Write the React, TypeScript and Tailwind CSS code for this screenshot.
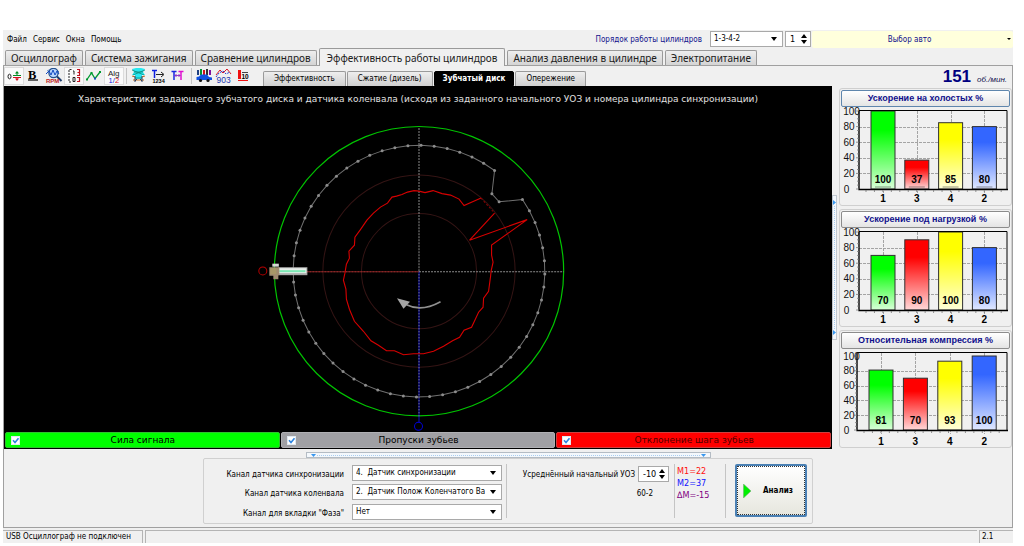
import { useState } from "react";
import type { ReactNode } from "react";

const mainTabs = [
  "Осциллограф",
  "Система зажигания",
  "Сравнение цилиндров",
  "Эффективность работы цилиндров",
  "Анализ давления в цилиндре",
  "Электропитание",
];
const subTabs = ["Эффективность", "Сжатие (дизель)", "Зубчатый диск", "Опережение"];

const CX = 418.5;
const CY = 271;

function polar(deg: number, r: number): [number, number] {
  const a = (deg * Math.PI) / 180;
  return [CX + r * Math.sin(a), CY - r * Math.cos(a)];
}

const teeth: [number, number][] = [];
for (let i = 0; i < 58; i++) teeth.push(polar(55.3 + i * 5.993, 125.7));
teeth.push([491.3, 193.7], [498.5, 201.7]);

const deviation =
  "494,213 469,240 526.5,219.5 491,245 491,255 492.5,262 490.5,271 490,276 488,291 483,298 482.5,307 478,312 471,327 463.5,330 459,337 452,340.5 443,346 433,351 423,353.5 413,353.5 403,354.5 394,350.5 386,350.5 378,345 370.5,340.5 363,331 354,321 349,309 346,299 345.5,289 343,280 344.5,273 346,264 349,258 348.5,251 354,245 354.5,237 360,229.5 366.5,220 373,213 380,207 387,203 391.5,197 396,196 401.5,194.5 407,192 413.5,190.5 418.5,191 424.5,192.5 432.5,190.5 441.5,193.5 450,195 458.5,199 463.5,205.5 480.5,198";

function Caret({ className = "" }: { className?: string }) {
  return (
    <svg viewBox="0 0 6 4" className={`pointer-events-none w-[6px] h-[4px] ${className}`} aria-hidden="true">
      <path d="M0 0H6L3 4Z" fill="#000" />
    </svg>
  );
}

function Picker({ id, options, className }: { id: string; options: string[]; className: string }) {
  return (
    <div className={`relative ${className}`}>
      <select
        id={id}
        className="block h-full w-full appearance-none border border-[#a9a9a9] bg-white pr-4 pl-[3px] font-['DejaVu_Sans_Condensed','Noto_Sans',sans-serif] text-[8px] leading-[14px] text-black outline-none"
      >
        {options.map((o) => (
          <option key={o}>{o}</option>
        ))}
      </select>
      <Caret className="absolute top-1/2 right-[6px] -translate-y-1/2" />
    </div>
  );
}

function Spinner({ id, value, label, className }: { id: string; value: number; label?: string; className: string }) {
  const [n, setN] = useState(value);
  return (
    <div className={`flex items-center border border-[#a9a9a9] bg-white pr-[3px] ${className}`}>
      <input
        id={id}
        type="number"
        aria-label={label}
        value={n}
        onChange={(e) => setN(Number(e.target.value))}
        className="w-0 min-w-0 flex-1 bg-transparent pl-1 text-[9px] leading-[14px] outline-none [appearance:textfield] [&::-webkit-inner-spin-button]:appearance-none"
      />
      <div className="flex flex-col gap-[2px]">
        <button type="button" aria-label="Больше" onClick={() => setN(n + 1)}>
          <Caret className="block rotate-180" />
        </button>
        <button type="button" aria-label="Меньше" onClick={() => setN(n - 1)}>
          <Caret className="block" />
        </button>
      </div>
    </div>
  );
}

function Tool({ label, pressed, children }: { label: string; pressed?: boolean; children: ReactNode }) {
  return (
    <button
      type="button"
      aria-label={label}
      aria-pressed={!!pressed}
      className={`h-[18px] w-5 ${pressed ? "border border-[#dcdcdc] bg-[#fafafa]" : "border border-transparent"}`}
    >
      <svg viewBox="1 1 18 16" className="block h-4 w-[18px]" fontFamily="Liberation Sans, sans-serif">
        {children}
      </svg>
    </button>
  );
}

function Toolbar() {
  return (
    <div className="flex items-center">
      <Tool label="Ноль" pressed>
        <ellipse cx="5.5" cy="9.5" rx="1.5" ry="2.3" fill="none" stroke="#222" />
        <path d="M9 8.500H17M13 8V5" stroke="#008a20" fill="none" />
        <path d="M11 6.500L13 4L15 6.500Z" fill="#008a20" />
        <path d="M9 10.500H17M13 10V12" stroke="#d01020" fill="none" />
        <path d="M11 11.500L13 14L15 11.500Z" fill="#d01020" />
      </Tool>
      <Tool label="Жирные линии">
        <text x="4" y="11.500" fontSize="12.500" fontWeight="bold" fontFamily="Liberation Serif, serif">B</text>
        <path d="M4 13H14" stroke="#000" strokeWidth="1.2" />
      </Tool>
      <Tool label="Обороты">
        <path d="M3 4L7 2H12L15 5" fill="none" stroke="#6a90c8" />
        <circle cx="9.5" cy="6" r="4.6" fill="#bcd8ff" stroke="#24508c" strokeWidth="1.3" />
        <path d="M2 7L5 4L7 8L9 3L11 8L13 4L15 7" fill="none" stroke="#1048c0" />
        <path d="M13 9.500L17.500 14" stroke="#1c3c6c" strokeWidth="2" />
        <text x="2" y="15.500" fontSize="6" fontWeight="bold" fill="#c02020">RPM</text>
      </Tool>
      <Tool label="Шкала" pressed>
        <path d="M7.500 2.500H5V15H7.500" fill="none" stroke="#222" strokeDasharray="2 1" />
        <path d="M9 4H10V7.500M9 10.500H11V14.500H9Z" fill="none" stroke="#222" />
        <path d="M13 2.500H15.500V5.500H13.500M15.500 5.500V8.500H13M13 10.500H15.500V14.500H13" fill="none" stroke="#c01020" strokeWidth="1.2" />
      </Tool>
      <Tool label="График">
        <path d="M3 12.500L7.500 6L11 11.500L16 5" fill="none" stroke="#009a30" strokeWidth="1.3" />
        <path d="M2 11.500H4V13.500H2ZM6.500 5H8.500V7H6.500ZM15 4H17V6H15Z" fill="#009a30" />
        <path d="M10 10.500H12V12.500H10Z" fill="#1850c0" />
      </Tool>
      <Tool label="Алгоритм" pressed>
        <text x="4" y="8.500" fontSize="8" fill="#222">Alg</text>
        <text x="4.500" y="15.500" fontSize="7.500" fill="#1020e0">1/</text>
        <text x="11" y="15.500" fontSize="7.500" fill="#e01020">2</text>
      </Tool>
      <span className="mx-[2px] h-4 w-px bg-[#c4c4c4]" />
      <Tool label="Автомобиль">
        <path d="M3 2L7 1H12L16 2L14 5L16 8H13V12H6V8H3L5 5Z" fill="#28e8f0" />
        <path d="M3 3L15 8M16 3L4 8M5 5H14M6 11H13" stroke="#108878" strokeWidth=".8" />
        <path d="M3 9L6 10M16 9L13 10M4 13H15" stroke="#c07020" />
        <path d="M6 9V15M13 9V15M6 14L8 12M13 14L11 12" stroke="#304060" fill="none" />
      </Tool>
      <Tool label="Метки по порядку">
        <path d="M3 3.500H8M5.500 3.500V11" stroke="#1020e0" strokeWidth="1.5" fill="none" />
        <path d="M7 7.500H14M12 5L15 7.500L12 10" stroke="#222" fill="none" />
        <text x="3.500" y="15.500" fontSize="5.500" fontWeight="bold">1234</text>
      </Tool>
      <Tool label="Интервал">
        <path d="M2.500 4.500H7.500M5 4V13" stroke="#1828e0" strokeWidth="1.5" />
        <path d="M9.500 4.500H14.500M12 4V13" stroke="#e010d0" strokeWidth="1.5" />
        <path d="M6 8.500H11M7.500 7L6 8.500L7.500 10M9.500 7L11 8.500L9.500 10" stroke="#8010c0" fill="none" strokeWidth=".8" />
      </Tool>
      <span className="mx-[2px] h-4 w-px bg-[#c4c4c4]" />
      <Tool label="Сравнение авто">
        <path d="M3 3H5V8H3Z" fill="#204080" /><path d="M6 2H8V8H6Z" fill="#009030" />
        <path d="M9 3H11V8H9Z" fill="#d01020" /><path d="M12 2H14V8H12Z" fill="#303030" />
        <path d="M15 3H17V8H15Z" fill="#8010a0" />
        <path d="M2.500 10L5 9.500L7 7.500H13L15 10L18 10.500V13H2.500Z" fill="#1050e0" />
        <circle cx="6.500" cy="13.500" r="1.600" fill="#111" /><circle cx="14" cy="13.500" r="1.600" fill="#111" />
      </Tool>
      <Tool label="УОЗ">
        <path d="M2 8L6 3L9 6L13 2L17 7" fill="none" stroke="#d81828" />
        <path d="M2 10L5 6L9 4L12 7L16 5" fill="none" stroke="#2848d8" strokeDasharray="2 1" />
        <text x="2.500" y="15.500" fontSize="8.500" fill="#1838b0">903</text>
      </Tool>
      <Tool label="Порог">
        <path d="M4 3H7V12H4Z" fill="#f01010" />
        <path d="M4 13.500H14" stroke="#f01010" />
        <path d="M8 5.500H14" stroke="#444" />
        <text x="7.500" y="12" fontSize="6.500" fontWeight="bold">10</text>
      </Tool>
    </div>
  );
}

function Disc() {
  return (
    <svg viewBox="4 112 827 319" className="block w-full" role="img" aria-label="Диаграмма зубчатого диска">
      <circle cx={CX} cy={CY} r="57.500" fill="none" stroke="#341414" />
      <circle cx={CX} cy={CY} r="96" fill="none" stroke="#341414" />
      <circle cx={CX} cy={CY} r="144.500" fill="none" stroke="#00c400" strokeWidth="1.2" />
      <path d="M418.500 271V127M418.500 271.500H563" stroke="#8a8a8a" strokeDasharray="2 1" />
      <path d="M418.500 271V422" stroke="#1010c0" />
      <path d="M418.500 271V416" stroke="#9a9a9a" strokeDasharray="1 2" />
      <path d="M306 271.500H418" stroke="#5a2020" />
      <path d="M306 271.500H418" stroke="#a02828" strokeDasharray="2 1" />
      <polygon points={teeth.map((p) => p.join(",")).join(" ")} fill="none" stroke="#707070" />
      {teeth.map((p, i) => (
        <circle key={i} cx={p[0]} cy={p[1]} r="1.500" fill="#8c8c8c" />
      ))}
      <polyline points={deviation} fill="none" stroke="#d80000" strokeWidth="1.1" />
      <path d="M480.500 198L494 213" stroke="#900000" strokeDasharray="2 2" />
      <circle cx="262.500" cy="270.700" r="4" fill="none" stroke="#b80000" />
      <circle cx="418" cy="426" r="4" fill="none" stroke="#0000d8" />
      <rect x="278" y="267" width="29" height="8" fill="#a8a8a8" />
      <rect x="278" y="268" width="28" height="5" fill="#e8eeea" />
      <rect x="279" y="270" width="26" height="2" fill="#7ce8b4" />
      <path d="M269 267H279V275H278V279H273V275.500H269Z" fill="#a08c70" />
      <path d="M270 268H276V274H270Z" fill="#a89868" />
      <path d="M272 263.500H278.500V266.500H272Z" fill="#d8d8d8" />
      <path d="M440 301.500Q421 312 406 304.500" fill="none" stroke="#909090" strokeWidth="1.6" />
      <path d="M396.500 298L409.500 301.500L403 308.500Z" fill="#a4a4a4" />
    </svg>
  );
}

type Bar = { name: string; value: number; color: string };
const palette: [string, string][] = [
  ["1", "#00ff00"],
  ["3", "#ff0000"],
  ["4", "#ffff00"],
  ["2", "#3366ff"],
];

function makeBars(values: number[]): Bar[] {
  return values.map((value, i) => ({ name: palette[i][0], color: palette[i][1], value }));
}

function BarPanel({ id, title, bars, headroom = 0, active }: { id: string; title: string; bars: Bar[]; headroom?: number; active?: boolean }) {
  const left = headroom ? 18 : 20;
  const right = 168;
  const top = 5;
  const base = headroom ? 82 : 83;
  const nameY = 96 + (headroom ? 1 : 0);
  const scale = (base - top - headroom) / 100;
  const y = (v: number) => base - v * scale;
  const x = (i: number) => (headroom ? 42 : 44) + i * (headroom ? 34.4 : 33.8);
  return (
    <section className="rounded-[3px] border border-[#cfcfcf] px-px pt-px">
      <button
        type="button"
        className={`block h-[17px] w-full rounded-[2px] border bg-linear-to-b from-white to-[#e4e4e4] text-center text-[9px] leading-none font-bold text-[#10108c] ${active ? "border-[#5f86ad]" : "border-[#8c8c8c]"}`}
      >
        {title}
      </button>
      <svg viewBox="2 1 169 98" className="block w-full" role="img" aria-label={title} fontFamily="Liberation Sans, sans-serif">
        <defs>
          {bars.map((b, i) => (
            <linearGradient key={i} id={`${id}-${i}`} x1="0" y1="0" x2="0" y2="1">
              <stop offset=".25" stopColor={b.color} />
              <stop offset="1" stopColor={b.color} stopOpacity=".15" />
            </linearGradient>
          ))}
        </defs>
        {[20, 40, 60, 80].map((v) => (
          <path key={v} d={`M${left} ${Math.round(y(v)) + 0.5}H${right}`} stroke="#a4a4a4" strokeDasharray="3 1" />
        ))}
        {bars.map((b, i) => (
          <path key={b.name} d={`M${Math.round(x(i)) + 0.5} ${top}V${base + 4}`} stroke="#a4a4a4" strokeDasharray="3 1" />
        ))}
        {bars.map((b, i) => (
          <g key={b.name}>
            <rect x={x(i) - 12} y={y(b.value)} width="24" height={base - y(b.value)} fill="#fff" />
            <rect x={x(i) - 12} y={y(b.value)} width="24" height={base - y(b.value)} fill={`url(#${id}-${i})`} stroke="#303030" />
            {active && <rect x={x(i) - 8} y={base - 3} width="16" height="2" fill="#000" opacity=".2" />}
            <text x={x(i)} y={base - 6} fontSize="10" fontWeight="bold" textAnchor="middle">{b.value}</text>
            <text x={x(i)} y={nameY} fontSize="10" fontWeight="bold" textAnchor="middle">{b.name}</text>
          </g>
        ))}
        <path d={`M${left} ${top - 0.5}H${right}V${base}`} fill="none" stroke="#000" />
        <path d={`M${left} ${top}V${base + 0.5}H${right + 1}`} fill="none" stroke="#000" strokeWidth="1.4" />
        {Array.from({ length: 21 }, (_, i) => (
          <path key={i} d={`M${left - (i % 4 ? 2 : 3)} ${y(i * 5)}H${left}`} stroke="#777" strokeWidth=".8" />
        ))}
        {Array.from({ length: 17 }, (_, i) => (
          <path key={i} d={`M${left + 7 + i * 8.45} ${base + 1}V${base + 3}`} stroke="#777" strokeWidth=".8" />
        ))}
        {[0, 20, 40, 60, 80, 100].map((v) => (
          <text key={v} x={v === 0 ? 7.5 : v === 100 ? 12.5 : 10} y={y(v) + 3.5} fontSize="10" fill="#111" textAnchor="middle">{v}</text>
        ))}
      </svg>
    </section>
  );
}

function Legend({ text, className }: { text: string; className: string }) {
  return (
    <label className={`flex h-4 flex-1 items-center rounded-[2px] border px-[5px] text-[9px] ${className}`}>
      <span className="relative flex size-[9px]">
        <input type="checkbox" defaultChecked className="peer size-full appearance-none border border-[#dfe8f0] bg-white" />
        <svg viewBox="0 0 9 9" className="pointer-events-none invisible absolute inset-0 peer-checked:visible">
          <path d="M2 4.300L4 6.500L7.500 2.200" fill="none" stroke="#2c84e0" strokeWidth="1.6" />
        </svg>
      </span>
      <span className="flex-1 pt-px pr-2 text-center leading-none">{text}</span>
    </label>
  );
}

export default function App() {
  const [tab, setTab] = useState(3);
  const [sub, setSub] = useState(2);
  return (
    <div className="min-h-screen bg-white pt-[30px] pr-[11px] pl-[3px] font-['Liberation_Sans',Arial,sans-serif] text-[9px] leading-none text-black">
      <div className="bg-[#f0f0f0]">
        <header className="flex h-[18px] items-center font-['DejaVu_Sans_Condensed','Noto_Sans',sans-serif] text-[8px]">
          <nav className="flex flex-1 gap-[6px] pt-[2px] pl-1">
            {["Файл", "Сервис", "Окна", "Помощь"].map((m) => (
              <button key={m} type="button">{m}</button>
            ))}
          </nav>
          <label htmlFor="order" className="mr-2 pt-[2px] text-[#10108c]">
            Порядок работы цилиндров
          </label>
          <Picker id="order" options={["1-3-4-2", "1-2-4-3"]} className="h-4 w-[73px]" />
          <Spinner id="cyl" value={1} label="Номер цилиндра" className="ml-[2px] h-4 w-[26px]" />
          <button type="button" className="ml-px flex h-[17px] w-[201px] items-center rounded-[2px] bg-[#ffffdc] pr-[2px] text-[#10108c]">
            <span className="flex-1 pt-px">Выбор авто</span>
            <svg viewBox="0 0 4 2" className="h-[2px] w-1" aria-hidden="true"><path d="M0 0H4L2 2Z" fill="#000" /></svg>
          </button>
        </header>

        <div role="tablist" className="flex h-[17px] items-end gap-[2px] pl-[2px] font-['Noto_Sans',sans-serif] text-[10px]">
          {mainTabs.map((t, i) => (
            <button
              key={t}
              type="button"
              role="tab"
              aria-selected={i === tab}
              onClick={() => setTab(i)}
              className={`rounded-t-[2px] border border-b-0 whitespace-nowrap text-[#202020] ${i === tab ? "-mb-px h-[18px] border-[#9a9a9a] bg-[#f0f0f0] px-[7px]" : "h-[15px] border-[#9a9a9a] bg-linear-to-b from-[#eeeeee] to-[#d4d4d4] px-[5px]"}`}
            >
              {t}
            </button>
          ))}
        </div>

        <main className="border border-[#a0a0a0]">
          <div className="flex h-5 items-center">
            <Toolbar />
            <div role="tablist" className="ml-[9px] flex items-end gap-px self-end font-['DejaVu_Sans_Condensed','Noto_Sans',sans-serif] text-[8px]">
              {subTabs.map((t, i) => (
                <button
                  key={t}
                  type="button"
                  role="tab"
                  aria-selected={i === sub}
                  onClick={() => setSub(i)}
                  className={`h-[15px] rounded-t-[2px] border whitespace-nowrap ${i === sub ? "border-black bg-black px-2 font-bold text-white" : "border-b-0 border-[#9a9a9a] bg-linear-to-b from-[#eeeeee] to-[#d0d0d0] px-[10px]"}`}
                >
                  {t}
                </button>
              ))}
            </div>
            <p className="ml-auto flex items-baseline gap-[6px] pr-[5px] text-[#000080]">
              <strong className="text-[17px]">151</strong>
              <em className="text-[8px] text-[#10104c]">об./мин.</em>
            </p>
          </div>

          <div className="flex">
            <section className="min-w-0 flex-1 bg-black">
              <h1 className="h-[26px] pt-[9px] text-center font-['DejaVu_Sans',sans-serif] text-[9px] text-[#e0e0e0]">
                Характеристики задающего зубчатого диска и датчика коленвала (исходя из заданного начального УОЗ и номера цилиндра синхронизации)
              </h1>
              <Disc />
              <div className="flex gap-px px-px py-px font-['DejaVu_Sans',sans-serif] text-black">
                <Legend text="Сила сигнала" className="border-[#30c030] bg-[#00ff00]" />
                <Legend text="Пропуски зубьев" className="border-[#b0b0b4] bg-[#a0a0a4]" />
                <Legend text="Отклонение шага зубьев" className="border-[#d04040] bg-[#ff0000] text-[#500000]" />
              </div>
            </section>

            <div className="flex w-[7px] flex-col justify-center">
              <button type="button" aria-label="Свернуть панель" className="flex h-[145px] w-[5px] flex-col items-center justify-between border border-[#c0c8d0] bg-[#f4f8fc] py-1">
                <svg viewBox="0 0 3 5" className="h-[5px] w-[3px]"><path d="M0 0L3 2.500L0 5Z" fill="#3898f0" /></svg>
                <span className="my-px w-0 flex-1 border-l border-dotted border-[#a8cdf0]" />
                <svg viewBox="0 0 3 5" className="h-[5px] w-[3px]"><path d="M0 0L3 2.500L0 5Z" fill="#3898f0" /></svg>
              </button>
            </div>

            <aside className="flex w-[173px] flex-col gap-[3px] pt-[2px]">
              <BarPanel id="idle" title="Ускорение на холостых %" bars={makeBars([100, 37, 85, 80])} active />
              <BarPanel id="load" title="Ускорение под нагрузкой %" bars={makeBars([70, 90, 100, 80])} />
              <BarPanel id="comp" title="Относительная компрессия %" bars={makeBars([81, 70, 93, 100])} headroom={3} />
            </aside>
          </div>

          <div className="flex flex-col items-center pt-[3px] pb-[3px]">
            <button type="button" aria-label="Свернуть настройки" className="flex h-[6px] w-[405px] items-center justify-between border border-[#b4bcc4] bg-[#f4f8fc] px-1">
              <svg viewBox="0 0 5 3" className="h-[3px] w-[5px]"><path d="M0 0H5L2.500 3Z" fill="#3898f0" /></svg>
              <span className="mx-px h-0 flex-1 border-t border-dotted border-[#a8cdf0]" />
              <svg viewBox="0 0 5 3" className="h-[3px] w-[5px]"><path d="M0 0H5L2.500 3Z" fill="#3898f0" /></svg>
            </button>
            <form
              className="flex h-[66px] w-[610px] rounded-[2px] border border-[#d0d0d0] pt-[5px] font-['DejaVu_Sans_Condensed','Noto_Sans',sans-serif] text-[8px]"
              onSubmit={(e) => e.preventDefault()}
            >
              <div className="grid h-[56px] w-[298px] grid-cols-[1fr_150px] items-center gap-x-2 gap-y-[3px]">
                <label htmlFor="sync" className="pt-1 text-right">Канал датчика синхронизации</label>
                <Picker id="sync" options={["4.\u00a0 Датчик синхронизации"]} className="h-4" />
                <label htmlFor="crank" className="pt-1 text-right">Канал датчика коленвала</label>
                <Picker id="crank" options={["2.\u00a0 Датчик Полож Коленчатого Ва"]} className="h-4" />
                <label htmlFor="phase" className="pt-1 text-right">Канал для вкладки "Фаза"</label>
                <Picker id="phase" options={["Нет"]} className="h-4" />
              </div>
              <span className="ml-1 h-[54px] w-px bg-[#c4c4c4]" />
              <div className="flex w-[167px] flex-col items-end gap-2 pt-[2px] pr-[5px]">
                <div className="flex items-center gap-[3px]">
                  <label htmlFor="adv" className="pt-[2px] whitespace-nowrap">Усреднённый начальный УОЗ</label>
                  <Spinner id="adv" value={-10} className="h-4 w-[31px]" />
                </div>
                <span className="pr-4">60-2</span>
              </div>
              <div className="flex h-[54px] w-[51px] flex-col gap-[3px] border-l border-[#c4c4c4] pt-[3px] pl-[2px] text-[9px]">
                <span className="text-[#ff1010]">M1=22</span>
                <span className="text-[#1010ff]">M2=37</span>
                <span className="text-[#800080]">∆M=-15</span>
              </div>
              <span className="h-[54px] w-px bg-[#c4c4c4]" />
              <button type="submit" className="ml-[9px] flex h-[53px] w-[72px] items-center gap-[12px] rounded-[2px] border-2 border-[#4a80b4] bg-linear-to-b from-white to-[#e6e6de] pl-[6px] font-bold outline-1 -outline-offset-3 outline-dotted outline-[#333]">
                <svg viewBox="0 0 8 14" className="h-[14px] w-2"><path d="M.5 0L8 7L.5 14Z" fill="#00f000" stroke="#70b070" strokeWidth=".6" /></svg>
                Анализ
              </button>
            </form>
          </div>
        </main>

        <footer className="flex h-[15px] gap-[2px] pt-[2px] font-['DejaVu_Sans_Condensed','Noto_Sans',sans-serif] text-[8px]">
          <span className="w-[140px] border-t border-r border-[#b4b4b4] pt-[2px] pl-[3px]">USB Осциллограф не подключен</span>
          <span className="flex-1 border-t border-l border-[#b4b4b4]" />
          <span className="w-[34px] border-t border-l border-[#b4b4b4] pt-[2px] pl-[2px]">2.1</span>
        </footer>
      </div>
    </div>
  );
}
